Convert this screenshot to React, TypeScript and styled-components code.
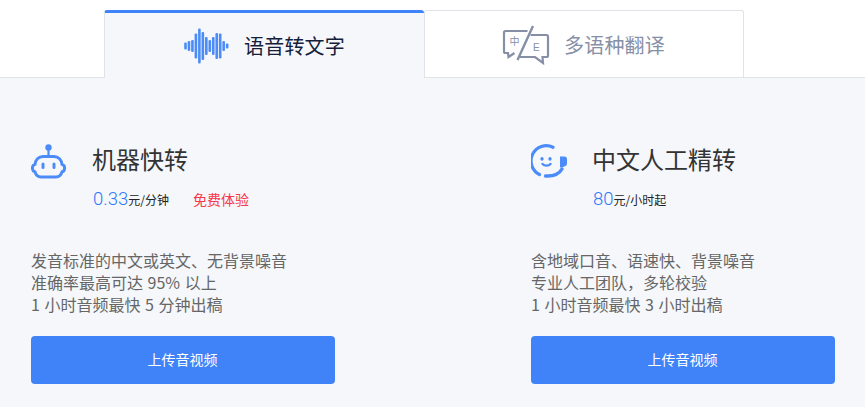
import React from 'react';
import styled, {createGlobalStyle} from 'styled-components';

const GlobalStyle = createGlobalStyle`
	html, body {
		margin: 0;
		padding: 0;
		background: #fff;
		font-family: 'Noto Sans CJK SC', 'Liberation Sans', sans-serif;
	}
`;

const Page = styled.div`
	width: 865px;
	height: 407px;
	overflow: hidden;
`;

const TabBar = styled.div`
	display: flex;
	align-items: flex-start;
	height: 78px;
	box-sizing: border-box;
	padding: 10px 0 0 104px;
	border-bottom: 1px solid #e0e3e8;
`;

const Tab = styled.div<{$active?: boolean}>`
	width: 320px;
	height: ${(props) => (props.$active ? '68px' : '67px')};
	flex: none;
	box-sizing: border-box;
	display: flex;
	align-items: center;
	justify-content: center;
	gap: 14px;
	font-size: 20px;
	letter-spacing: 0.2px;
	border-radius: 3px 3px 0 0;
	border: 1px solid #e0e3e8;
	color: ${(props) => (props.$active ? '#14203a' : '#868fa6')};
	background: ${(props) => (props.$active ? '#f5f7fa' : '#fff')};
	${(props) =>
		props.$active
			? 'border-top: 3px solid #3f83f8; border-right: none; border-bottom: none;'
			: 'border-bottom: none;'}

	svg {
		overflow: visible;
	}
`;

const Body = styled.div`
	display: flex;
	height: 329px;
	box-sizing: border-box;
	padding: 57px 0 0 31px;
	background: #f5f7fa;
`;

const Plan = styled.div`
	width: 500px;
	flex: none;
	display: flex;
	flex-direction: column;
`;

const PlanHead = styled.div`
	display: flex;
	gap: 26px;
	height: 74px;
`;

const IconSlot = styled.div`
	width: 36px;
	padding-top: 9px;
`;

const PlanTitle = styled.h2`
	margin: 0 0 0 -1px;
	font-size: 24px;
	font-weight: 400;
	line-height: 48px;
	color: #333;
`;

const PriceRow = styled.div`
	display: flex;
	align-items: baseline;
	height: 32px;
	margin-top: 5px;
	color: #222;
	font-size: 12px;
`;

const Price = styled.span`
	font-family: Roboto, sans-serif;
	font-size: 18.5px;
	font-weight: 300;
	color: #2f78f8;
`;

const Trial = styled.span`
	margin-left: 24px;
	font-size: 14px;
	color: #f5384a;
`;

const Features = styled.div`
	margin-top: 40px;
	font-size: 16px;
	line-height: 22px;
	word-spacing: 1px;
	color: #666;
`;

const UploadButton = styled.button`
	width: 304px;
	height: 48px;
	margin-top: 21px;
	padding: 0 1px 2px 0;
	border: none;
	border-radius: 4px;
	background: #4083f8;
	color: #fff;
	font-family: inherit;
	font-size: 14px;
`;

const bars = [7, 10, 12, 25, 35, 28, 18, 12, 18, 26, 25, 10, 5];

const WaveIcon = () => (
	<svg width='46' height='40' viewBox='0 0 46 40'>
		{bars.map((h, i) => (
			<rect
				key={i}
				x={i * 3.47 + 0.2}
				y={20 - h / 2}
				width='2.6'
				height={h}
				rx='1'
				fill='#4c8cf8'
			/>
		))}
	</svg>
);

const TranslateIcon = () => (
	<svg width='47' height='40' viewBox='0.500 0 47 40' fill='none' stroke='#868fa6' strokeWidth='2.200'>
		<path d='M25 7H3a1.500 1.500 0 0 0-1.500 1.500V27.500A1.500 1.500 0 0 0 3 29h2.500l.5 4 6-4' />
		<path d='M28 11h16a1.500 1.500 0 0 1 1.500 1.500V31.500a1.500 1.500 0 0 1-1.500 1.500h-4l.5 6-8-6H17' />
		<path d='M30.500 2L15 36' strokeWidth='2.400' />
		<text x='7' y='21' fontSize='10' fill='#868fa6' stroke='none'>中</text>
		<text x='30.500' y='27' fontSize='10' fill='#868fa6' stroke='none' fontFamily='Liberation Sans'>E</text>
	</svg>
);

const RobotIcon = () => (
	<svg width='36' height='36' viewBox='0 0 36 36' fill='none' stroke='#4c8cf8' strokeWidth='3'>
		<circle cx='17.500' cy='3.500' r='3.200' fill='#4c8cf8' stroke='none' />
		<path d='M17.500 5v7' strokeWidth='2.200' />
		<path d='M12 12.400h11c4.500 0 7.500 3.500 8 8 2 .5 2.600 2 2.600 3.500 0 2-1 3.500-2.600 4-.8 3-3 5-6 5H10c-3 0-5.200-2-6-5-1.600-.5-2.600-2-2.600-4 0-1.500.6-3 2.600-3.500.5-4.500 3.500-8 8-8z' />
		<path d='M12 20v3.500M23 20v3.500' strokeLinecap='round' />
	</svg>
);

const AgentIcon = () => (
	<svg width='36' height='36' viewBox='0 0 36 36' fill='none' stroke='#4c8cf8' strokeWidth='3.200' strokeLinecap='round'>
		<path d='M22 3.300A15 15 0 0 0 8.500 30.500' />
		<path d='M11 14.500v.6M19 14.500v.6' strokeWidth='3.200' />
		<path d='M11.500 20c2 2.200 6 2.200 8 0' strokeWidth='2.400' />
		<path d='M29 12.500h4.500c1.500 0 2.500 1 2.500 2.500v4.500c0 2-2 3.500-7 4z' fill='#4c8cf8' stroke='none' />
		<path d='M31 25c-2.500 4.500-8 7-14.500 7H14.500' strokeWidth='3.400' />
	</svg>
);

const plans = [
	{
		title: '机器快转',
		icon: <RobotIcon />,
		price: '0.33',
		unit: '元/分钟',
		trial: '免费体验',
		lines: ['发音标准的中文或英文、无背景噪音', '准确率最高可达 95% 以上', '1 小时音频最快 5 分钟出稿'],
	},
	{
		title: '中文人工精转',
		icon: <AgentIcon />,
		price: '80',
		unit: '元/小时起',
		lines: ['含地域口音、语速快、背景噪音', '专业人工团队，多轮校验', '1 小时音频最快 3 小时出稿'],
	},
];

const App: React.FC = () => {
	return (
		<Page>
			<GlobalStyle />
			<TabBar>
				<Tab $active>
					<WaveIcon />
					语音转文字
				</Tab>
				<Tab>
					<TranslateIcon />
					多语种翻译
				</Tab>
			</TabBar>
			<Body>
				{plans.map((plan) => (
					<Plan key={plan.title}>
						<PlanHead>
							<IconSlot>{plan.icon}</IconSlot>
							<div>
								<PlanTitle>{plan.title}</PlanTitle>
								<PriceRow>
									<Price>{plan.price}</Price>
									{plan.unit}
									{plan.trial && <Trial>{plan.trial}</Trial>}
								</PriceRow>
							</div>
						</PlanHead>
						<Features>
							{plan.lines.map((line) => (
								<div key={line}>{line}</div>
							))}
						</Features>
						<UploadButton>上传音视频</UploadButton>
					</Plan>
				))}
			</Body>
		</Page>
	);
};

export default App;
